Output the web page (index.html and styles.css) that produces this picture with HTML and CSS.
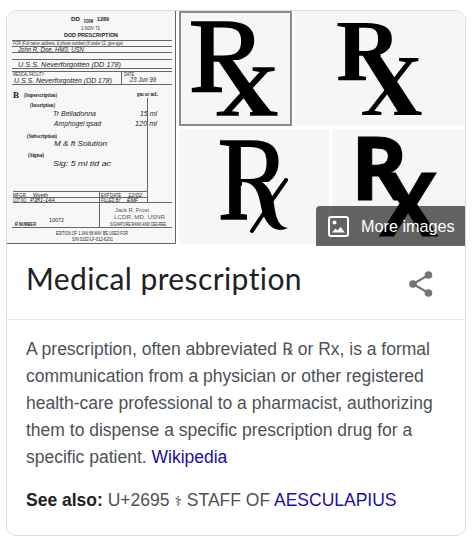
FILE: index.html
```html
<!DOCTYPE html>
<html lang="en">
<head>
<meta charset="utf-8">
<title>Medical prescription</title>
<link rel="stylesheet" href="styles.css">
</head>
<body>
<article class="card">
  <div class="gallery">
    <svg class="form" viewBox="7 11 169 233" role="img" aria-label="Prescription form">
      <rect class="paper" x="7" y="11" width="169" height="233"/>
      <path class="edge" d="M175.5 11V243.5H7"/>
      <g class="rules">
        <path d="M12 40.5H172M12 46.5H172M12 52.5H172M12 59.5H172M12 68.5H172M12 71.5H172M12 84.5H172M121.5 71V84M147.5 98V202M13 191.500H147M13 197.500H147M13 202.500H172M99.500 191V227M12 227.500H172"/>
      </g>
      <g class="print">
        <text x="71" y="21" textLength="9" lengthAdjust="spacingAndGlyphs" class="b">DD</text>
        <text x="84" y="23" textLength="9" lengthAdjust="spacingAndGlyphs" class="tiny b">FORM</text>
        <text x="97" y="20.500" textLength="12" lengthAdjust="spacingAndGlyphs" class="b">1289</text>
        <text x="81" y="30" textLength="19" lengthAdjust="spacingAndGlyphs" class="tiny">1 NOV 71</text>
        <text x="64" y="37" textLength="54" lengthAdjust="spacingAndGlyphs" class="b">DOD PRESCRIPTION</text>
        <text x="13" y="45" textLength="110" lengthAdjust="spacingAndGlyphs" class="tiny">FOR (Full name, address, &amp; phone number) (If under 12, give age)</text>
        <text x="13" y="76" textLength="31" lengthAdjust="spacingAndGlyphs" class="tiny">MEDICAL FACILITY</text>
        <text x="124" y="75.500" textLength="10" lengthAdjust="spacingAndGlyphs" class="tiny">DATE</text>
        <text x="13" y="98" class="rx">B</text>
        <text x="24" y="97" textLength="33" lengthAdjust="spacingAndGlyphs" class="serif">(Superscription)</text>
        <text x="30" y="107" textLength="25" lengthAdjust="spacingAndGlyphs" class="serif">(Inscription)</text>
        <text x="137" y="96" textLength="21" lengthAdjust="spacingAndGlyphs" class="serif">gm or mL</text>
        <text x="27" y="138" textLength="30" lengthAdjust="spacingAndGlyphs" class="serif">(Subscription)</text>
        <text x="28" y="157" textLength="16" lengthAdjust="spacingAndGlyphs" class="serif">(Signa)</text>
        <text x="13" y="196.500" textLength="14" lengthAdjust="spacingAndGlyphs" class="tiny">MFGR.</text>
        <text x="13" y="202" textLength="14" lengthAdjust="spacingAndGlyphs" class="tiny">LOT NO.</text>
        <text x="101" y="196.500" textLength="20" lengthAdjust="spacingAndGlyphs" class="tiny">EXP DATE</text>
        <text x="101" y="202" textLength="20" lengthAdjust="spacingAndGlyphs" class="tiny">FILLED BY</text>
        <text x="15" y="226" textLength="21" lengthAdjust="spacingAndGlyphs" class="tiny b">R NUMBER</text>
        <text x="49" y="222" textLength="15" lengthAdjust="spacingAndGlyphs">10072</text>
        <text x="110" y="226" textLength="56" lengthAdjust="spacingAndGlyphs" class="tiny">SIGNATURE RANK AND DEGREE</text>
        <text x="56" y="235" textLength="72" lengthAdjust="spacingAndGlyphs" class="tiny">EDITION OF 1 JAN 68 MAY BE USED FOR</text>
        <text x="72" y="241" textLength="41" lengthAdjust="spacingAndGlyphs" class="tiny">S/N 0102-LF-012-6201</text>
      </g>
      <g class="hand">
        <text x="18" y="51.500" textLength="66" lengthAdjust="spacingAndGlyphs">John R. Doe, HM3, USN</text>
        <text x="18" y="66.500" textLength="103" lengthAdjust="spacingAndGlyphs">U.S.S. Neverforgotten (DD 178)</text>
        <text x="14" y="83" textLength="98" lengthAdjust="spacingAndGlyphs">U.S.S. Neverforgotten (DD 178)</text>
        <text x="130" y="82" textLength="26" lengthAdjust="spacingAndGlyphs">23 Jun 99</text>
        <text x="53" y="116" textLength="43" lengthAdjust="spacingAndGlyphs">Tr Belladonna</text>
        <text x="54" y="126" textLength="47" lengthAdjust="spacingAndGlyphs">Amphogel qsad</text>
        <text x="140" y="116" textLength="17" lengthAdjust="spacingAndGlyphs">15 ml</text>
        <text x="135" y="126" textLength="22" lengthAdjust="spacingAndGlyphs">120 ml</text>
        <text x="54" y="146" textLength="53" lengthAdjust="spacingAndGlyphs">M &amp; ft Solution</text>
        <text x="53" y="166" textLength="58" lengthAdjust="spacingAndGlyphs">Sig: 5 ml tid ac</text>
        <text x="33" y="196.500" textLength="15" lengthAdjust="spacingAndGlyphs" class="small">Wyeth</text>
        <text x="30" y="202" textLength="25" lengthAdjust="spacingAndGlyphs" class="small">P381-14A</text>
        <text x="128" y="196.500" textLength="14" lengthAdjust="spacingAndGlyphs" class="small">12/02</text>
        <text x="127" y="202" textLength="11" lengthAdjust="spacingAndGlyphs" class="small">EMF</text>
        <text x="115" y="211.500" textLength="34" lengthAdjust="spacingAndGlyphs" class="signature">Jack R. Frost</text>
        <text x="114" y="218.500" textLength="51" lengthAdjust="spacingAndGlyphs" class="signature">LCDR, MD, USNR</text>
      </g>
    </svg>
    <div class="thumbs">
      <div class="row">
        <svg class="tile framed" viewBox="179 11 113 115" role="img" aria-label="Rx">
          <defs>
            <clipPath id="r1"><path d="M179 11H292V60H222V126H179Z"/></clipPath>
            <clipPath id="x1"><path d="M250 60H292V126H208V104L240 90Z"/></clipPath>
          </defs>
          <g clip-path="url(#r1)"><text class="mark thick" transform="translate(188.500 90.500) scale(1.12 1)" font-size="105">R</text></g>
          <path d="M215 56H230L272 115H255Z"/>
          <g clip-path="url(#x1)"><text class="mark thick" transform="translate(216.500 115) scale(1.22 1)" font-size="101">x</text></g>
        </svg>
        <svg class="tile grow" viewBox="295 11 170 115" role="img" aria-label="Rx">
          <defs>
            <clipPath id="r2"><path d="M295 11H465V56H366V126H295Z"/></clipPath>
            <clipPath id="x2"><path d="M398 50H465V126H350V100L385 86Z"/></clipPath>
          </defs>
          <g clip-path="url(#r2)"><text class="mark bold" transform="translate(336 80) scale(1.04 1)" font-size="87">R</text></g>
          <path d="M361 53L377 51L419 115H400Z"/>
          <g clip-path="url(#x2)"><text class="mark bold" transform="translate(360.500 115)" font-size="86">X</text></g>
        </svg>
      </div>
      <div class="row">
        <svg class="tile half" viewBox="179 129 150 115" role="img" aria-label="Rx">
          <defs><clipPath id="r3"><path d="M179 129H329V182H242V212H247V244H179Z"/></clipPath></defs>
          <g clip-path="url(#r3)"><text class="mark thick" transform="translate(217.500 218.500) scale(.92 1)" font-size="119">R</text></g>
          <path d="M242 179H256C268 184 272 192 274 204C276 219 279 227 288 228C275 234 266 225 262 211C259 196 257 182 242 182Z"/>
          <path class="slash" d="M252 231L264 213M272 200L286 180"/>
        </svg>
        <svg class="tile grow" viewBox="332 129 133 115" role="img" aria-label="Rx">
          <text class="mark sans" transform="translate(350.500 200)" font-size="88">R</text>
          <text class="mark sans" transform="translate(379.500 236)" font-size="87">X</text>
        </svg>
      </div>
    </div>
    <a class="more">
      <svg class="photo" viewBox="0 0 21 21"><rect x="1" y="1" width="19" height="19" rx="2"/><circle cx="6.500" cy="6.500" r="2"/><path d="M4 16.500L7.500 12.500L9.500 14.500L12.500 11L17 16.500Z"/></svg>
      <span>More images</span>
    </a>
  </div>
  <header class="heading">
    <h1>Medical prescription</h1>
    <svg class="share" viewBox="0 0 24 26"><path d="M19.500 4L4 13L19.500 22"/><circle cx="19.500" cy="4" r="3.800"/><circle cx="4" cy="13" r="3.800"/><circle cx="19.500" cy="22" r="3.800"/></svg>
  </header>
  <div class="body">
    <p>A prescription, often abbreviated <span class="symbol">℞</span> or Rx, is a formal<br>communication from a physician or other registered<br>health-care professional to a pharmacist, authorizing<br>them to dispense a specific prescription drug for a<br>specific patient. <a>Wikipedia</a></p>
    <p class="also"><b>See also:</b> U+2695 <span class="staff">⚕</span> STAFF OF <a>AESCULAPIUS</a></p>
  </div>
</article>
</body>
</html>
```
FILE: styles.css
```css
* { box-sizing: border-box; }
body {
  margin: 0;
  padding: 10px 0 0 6px;
  background: #fff;
  font-family: "Liberation Sans", Arial, sans-serif;
}
.card {
  width: 460px;
  height: 526px;
  border: 1px solid #dadce0;
  border-radius: 10px;
}
svg { display: block; flex: none; }
.gallery {
  position: relative;
  display: flex;
  gap: 3px;
  height: 233px;
}
.form { width: 169px; height: 233px; border-top-left-radius: 9px; }
.paper { fill: #f7f7f7; }
.edge, .rules path { fill: none; stroke: #666; stroke-width: 1; }
.print text { font-size: 5.5px; fill: #222; }
.print .tiny { font-size: 4.5px; }
.print .b { font-weight: bold; }
.print .serif { font-family: "Liberation Serif", serif; font-size: 6px; font-weight: bold; }
.print .rx { font-family: "Liberation Serif", serif; font-size: 9px; font-weight: bold; }
.hand text { font-size: 6.5px; font-style: italic; fill: #222; }
.hand .small { font-size: 4.5px; }
.hand .signature { font-size: 6px; font-style: normal; fill: #555; }
.thumbs { flex: 1; display: flex; flex-direction: column; gap: 3px; }
.row { display: flex; gap: 3px; }
.tile { height: 115px; background: #f6f6f6; }
.framed { width: 113px; box-shadow: inset 0 0 0 2px #8b8b8b; }
.half { width: 150px; }
.grow { flex: 1; }
.row:first-child .grow { border-top-right-radius: 9px; }
.mark { font-family: "Liberation Serif", serif; }
.thick { stroke: #000; stroke-width: 1.5px; }
.bold { font-weight: bold; }
.sans { font-family: "Open Sans", sans-serif; font-weight: bold; stroke: #000; stroke-width: 1px; }
.slash { stroke: #000; stroke-width: 4; stroke-linecap: round; }
.more {
  position: absolute;
  right: 0;
  bottom: -2px;
  width: 149px;
  height: 40px;
  padding-left: 12px;
  display: flex;
  align-items: center;
  gap: 12px;
  border-top-left-radius: 4px;
  background: rgba(0, 0, 0, .6);
  color: #fff;
  font-size: 16.2px;
  white-space: nowrap;
}
.photo { width: 21px; height: 21px; fill: #fff; }
.photo rect { fill: none; stroke: #fff; stroke-width: 2; }
.heading {
  height: 76px;
  padding: 0 32px 0 19px;
  display: flex;
  align-items: center;
  justify-content: space-between;
  border-bottom: 1px solid #e8e8e8;
}
h1 {
  margin: -8px 0 0;
  font: 400 30px/38px Lato, sans-serif;
  font-variant-ligatures: none;
  letter-spacing: .4px;
  color: #202124;
  white-space: nowrap;
}
.share { width: 24px; height: 26px; margin-top: 4px; fill: #757575; }
.share path { fill: none; stroke: #757575; stroke-width: 2.2; }
.body { padding: 16px 0 0 19px; color: #4d5156; font-size: 17.5px; line-height: 27px; white-space: nowrap; }
p { margin: 0; }
.also { margin-top: 16px; }
.body b { color: #202124; }
.body a { color: #1a0dab; }
.symbol { font-family: "Liberation Serif", "DejaVu Serif", serif; }
.staff { font-family: "DejaVu Sans", sans-serif; font-size: 14px; line-height: 1; }
```
